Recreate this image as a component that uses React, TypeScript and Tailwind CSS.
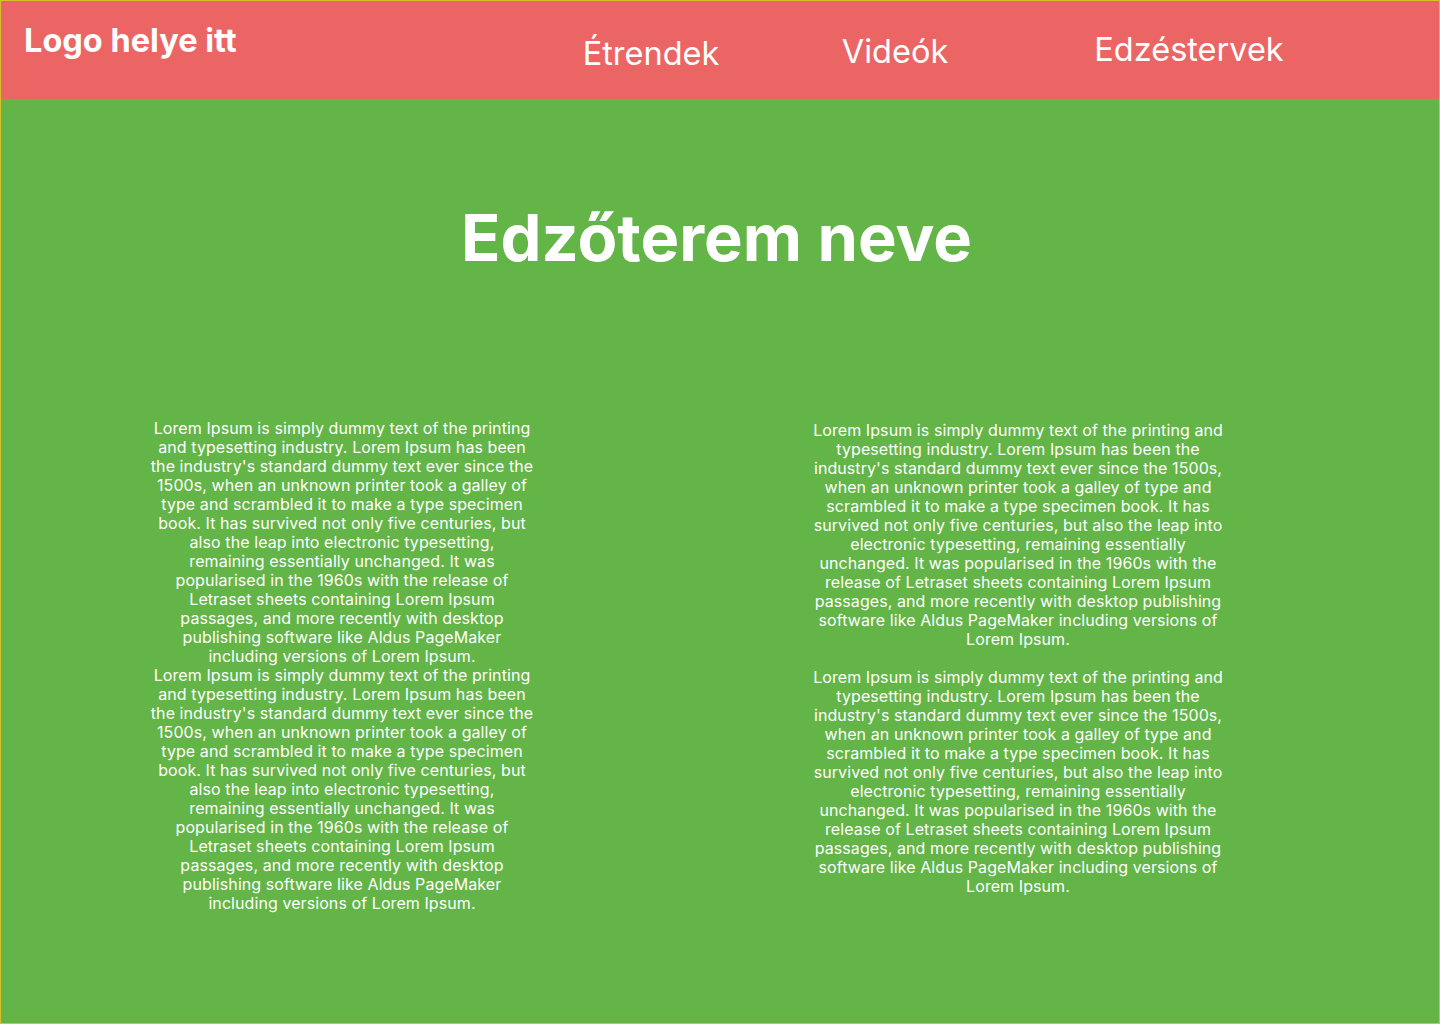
const LOREM =
  "Lorem Ipsum is simply dummy text of the printing and typesetting industry. Lorem Ipsum has been the industry's standard dummy text ever since the 1500s, when an unknown printer took a galley of type and scrambled it to make a type specimen book. It has survived not only five centuries, but also the leap into electronic typesetting, remaining essentially unchanged. It was popularised in the 1960s with the release of Letraset sheets containing Lorem Ipsum passages, and more recently with desktop publishing software like Aldus PageMaker including versions of Lorem Ipsum.";

export default function App() {
  return (
    <div
      className="w-full h-[1024px] border border-[#d6c12c] bg-[#62b546] text-white flex flex-col overflow-hidden"
      style={{ fontFamily: "Inter, 'Noto Sans', sans-serif" }}
    >
      {/* Header */}
      <header className="h-[98px] bg-[#eb6565] flex items-start flex-shrink-0">
        <div className="w-[550px] pl-[23px] mt-[24px]">
          <span className="text-[32.5px] font-bold leading-none">
            Logo helye itt
          </span>
        </div>
        <a className="w-[200px] text-center text-[32.5px] leading-none mt-[37px]">
          Étrendek
        </a>
        <a className="w-[200px] ml-[44px] text-center text-[32.5px] leading-none mt-[35px]">
          Videók
        </a>
        <a className="w-[200px] ml-[94px] text-center text-[32.5px] leading-none mt-[33px]">
          Edzéstervek
        </a>
      </header>

      {/* Main */}
      <main className="flex-1 flex flex-col">
        <h1 className="mt-[106px] pr-[7px] text-center text-[65px] font-bold leading-none">
          Edzőterem neve
        </h1>

        <div className="flex items-start pl-[149px] gap-[274px] mt-[149px] tracking-[0.08px]">
          {/* Left column */}
          <div className="w-[384px] text-center text-[16px] leading-[19px]">
            <p>{LOREM}</p>
            <p>{LOREM}</p>
          </div>

          {/* Right column */}
          <div className="w-[420px] mt-[2px] text-center text-[16px] leading-[19px]">
            <p className="mb-[19px]">{LOREM}</p>
            <p>{LOREM}</p>
          </div>
        </div>
      </main>
    </div>
  );
}
